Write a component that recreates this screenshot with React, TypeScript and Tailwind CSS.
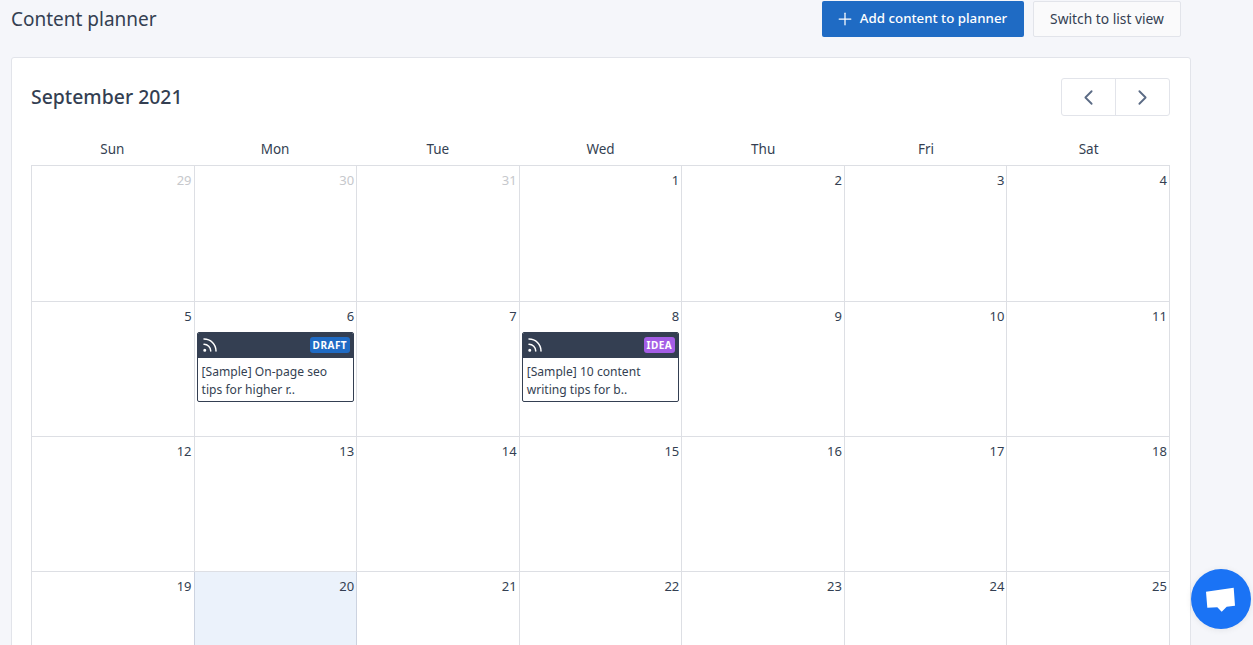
import React from 'react';
import { ChevronLeft, ChevronRight, Plus, Rss } from 'lucide-react';

type Day = { label: number; muted?: boolean; today?: boolean; event?: { status: string; badge: string; title: string } };

const weekdays = ['Sun', 'Mon', 'Tue', 'Wed', 'Thu', 'Fri', 'Sat'];

const days: Day[] = [
  { label: 29, muted: true },
  { label: 30, muted: true },
  { label: 31, muted: true },
  { label: 1 },
  { label: 2 },
  { label: 3 },
  { label: 4 },
  { label: 5 },
  { label: 6, event: { status: 'DRAFT', badge: 'bg-[#1f6bc4]', title: '[Sample] On-page seo tips for higher r..' } },
  { label: 7 },
  { label: 8, event: { status: 'IDEA', badge: 'bg-[#a45de6]', title: '[Sample] 10 content writing tips for b..' } },
  { label: 9 },
  { label: 10 },
  { label: 11 },
  { label: 12 },
  { label: 13 },
  { label: 14 },
  { label: 15 },
  { label: 16 },
  { label: 17 },
  { label: 18 },
  { label: 19 },
  { label: 20, today: true },
  { label: 21 },
  { label: 22 },
  { label: 23 },
  { label: 24 },
  { label: 25 },
];

function EventCard({ event }: { event: NonNullable<Day['event']> }) {
  return (
    <div className="mx-[2px] mt-[7px] overflow-hidden rounded-[2px] border border-[#343f52] bg-white">
      <div className="flex h-[25px] items-center justify-between bg-[#343f52] pb-[2px] pl-[3px] pr-[3px] text-white">
        <Rss size={18} strokeWidth={2} />
        <span className={`rounded-[3px] px-[3px] text-[10px] font-bold leading-[16px] tracking-[0.5px] ${event.badge}`}>{event.status}</span>
      </div>
      <p className="pb-[2px] pl-[4px] pr-[3px] pt-[5px] text-[12.1px] leading-[18px] text-[#343f52]">{event.title}</p>
    </div>
  );
}

export default function App() {
  return (
    <div className="relative h-screen overflow-hidden bg-[#f5f6fa] font-['Noto_Sans',sans-serif] text-[#343f52]">
      <div className="w-[1191px] pl-[11px] pt-[1px]">
        {/* Header */}
        <div className="mr-[10px] flex h-[36px] items-center">
          <h1 className="text-[19px] leading-[36px]">Content planner</h1>
          <button className="ml-auto flex h-[36px] w-[202px] items-center justify-center gap-[5px] rounded-[2px] bg-[#1f6bc4] pr-[4px] text-[13.3px] font-medium text-white">
            <Plus size={20} strokeWidth={1.5} />
            Add content to planner
          </button>
          <button className="ml-[9px] h-[36px] w-[148px] rounded-[2px] border border-[#e2e4ea] bg-[#fafafb] text-[13.8px] text-[#343f52]">
            Switch to list view
          </button>
        </div>

        {/* Calendar card */}
        <div className="mt-[20px] rounded-[3px] border border-[#e2e4ea] bg-white px-[19px] pt-[20px]">
          <div className="flex h-[38px] items-center justify-between">
            <h2 className="text-[19.4px] font-medium">September 2021</h2>
            <div className="mr-[1px] flex h-[38px] w-[109px] rounded-[3px] border border-[#e2e4ea] text-[#5b6b85]">
              <button className="flex flex-1 items-center justify-center border-r border-[#e2e4ea]">
                <ChevronLeft size={25} strokeWidth={1.75} />
              </button>
              <button className="flex flex-1 items-center justify-center">
                <ChevronRight size={25} strokeWidth={1.75} />
              </button>
            </div>
          </div>

          <div className="mt-[21px] w-[1139px]">
            <div className="grid h-[28px] grid-cols-7 items-center pb-[4px] text-center text-[13.5px]">
              {weekdays.map((name) => (
                <div key={name}>{name}</div>
              ))}
            </div>
            <div className="grid grid-cols-7 grid-rows-[136px_135px_135px_135px] border-l border-t border-[#dddfe4]">
              {days.map((day) => (
                <div
                  key={`${day.label}-${day.muted ? 'prev' : 'cur'}`}
                  className={`border-b border-r ${day.today ? 'border-r-[#ccd3e0] bg-[#ebf2fb] shadow-[-1px_0_0_#ccd3e0]' : 'border-[#dddfe4]'}`}
                >
                  <div className={`pr-[2px] pt-[5px] text-right text-[13px] leading-[18px] ${day.muted ? 'text-[#c6c8cc]' : ''}`}>
                    {day.label}
                  </div>
                  {day.event && <EventCard event={day.event} />}
                </div>
              ))}
            </div>
          </div>
        </div>
      </div>

      {/* Chat launcher */}
      <button className="fixed bottom-[16px] right-[2px] h-[60px] w-[60px] rounded-full bg-[#1a73f5] shadow-[0_1px_6px_rgba(0,0,0,0.08)]">
        <svg viewBox="0 0 60 60" className="h-[60px] w-[60px]">
          <polygon points="15,22.7 42.7,18.7 44,36.7 35.7,37.7 30.7,42.7 26.3,38.3 16.3,38.7" fill="#fff" />
        </svg>
      </button>
    </div>
  );
}
